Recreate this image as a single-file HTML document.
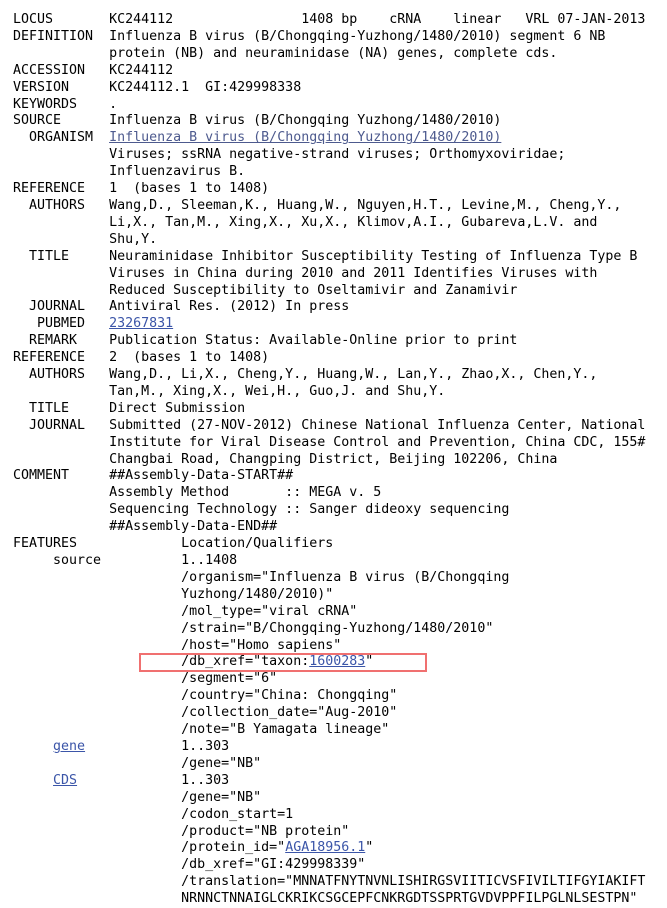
<!DOCTYPE html>
<html><head><meta charset="utf-8"><style>
html,body{margin:0;padding:0;background:#fff;width:667px;height:908px;overflow:hidden}
pre{margin:0;padding:12px 0 0 13px;font-family:"DejaVu Sans Mono","Liberation Mono",monospace;font-size:13.3px;line-height:16.9px;color:#000;white-space:pre}
a{color:#3b55a8;text-decoration:underline}
a.v{color:#4d5a8e}
.box{position:absolute;left:139px;top:653px;width:284px;height:15px;border:2px solid #f07070}
</style></head><body>
<div class="box"></div>
<pre>LOCUS       KC244112                1408 bp    cRNA    linear   VRL 07-JAN-2013
DEFINITION  Influenza B virus (B/Chongqing-Yuzhong/1480/2010) segment 6 NB
            protein (NB) and neuraminidase (NA) genes, complete cds.
ACCESSION   KC244112
VERSION     KC244112.1  GI:429998338
KEYWORDS    .
SOURCE      Influenza B virus (B/Chongqing Yuzhong/1480/2010)
  ORGANISM  <a class="v">Influenza B virus (B/Chongqing Yuzhong/1480/2010)</a>
            Viruses; ssRNA negative-strand viruses; Orthomyxoviridae;
            Influenzavirus B.
REFERENCE   1  (bases 1 to 1408)
  AUTHORS   Wang,D., Sleeman,K., Huang,W., Nguyen,H.T., Levine,M., Cheng,Y.,
            Li,X., Tan,M., Xing,X., Xu,X., Klimov,A.I., Gubareva,L.V. and
            Shu,Y.
  TITLE     Neuraminidase Inhibitor Susceptibility Testing of Influenza Type B
            Viruses in China during 2010 and 2011 Identifies Viruses with
            Reduced Susceptibility to Oseltamivir and Zanamivir
  JOURNAL   Antiviral Res. (2012) In press
   PUBMED   <a>23267831</a>
  REMARK    Publication Status: Available-Online prior to print
REFERENCE   2  (bases 1 to 1408)
  AUTHORS   Wang,D., Li,X., Cheng,Y., Huang,W., Lan,Y., Zhao,X., Chen,Y.,
            Tan,M., Xing,X., Wei,H., Guo,J. and Shu,Y.
  TITLE     Direct Submission
  JOURNAL   Submitted (27-NOV-2012) Chinese National Influenza Center, National
            Institute for Viral Disease Control and Prevention, China CDC, 155#
            Changbai Road, Changping District, Beijing 102206, China
COMMENT     ##Assembly-Data-START##
            Assembly Method       :: MEGA v. 5
            Sequencing Technology :: Sanger dideoxy sequencing
            ##Assembly-Data-END##
FEATURES             Location/Qualifiers
     source          1..1408
                     /organism="Influenza B virus (B/Chongqing
                     Yuzhong/1480/2010)"
                     /mol_type="viral cRNA"
                     /strain="B/Chongqing-Yuzhong/1480/2010"
                     /host="Homo sapiens"
                     /db_xref="taxon:<a>1600283</a>"
                     /segment="6"
                     /country="China: Chongqing"
                     /collection_date="Aug-2010"
                     /note="B Yamagata lineage"
     <a>gene</a>            1..303
                     /gene="NB"
     <a>CDS</a>             1..303
                     /gene="NB"
                     /codon_start=1
                     /product="NB protein"
                     /protein_id="<a>AGA18956.1</a>"
                     /db_xref="GI:429998339"
                     /translation="MNNATFNYTNVNLISHIRGSVIITICVSFIVILTIFGYIAKIFT
                     NRNNCTNNAIGLCKRIKCSGCEPFCNKRGDTSSPRTGVDVPPFILPGLNLSESTPN"
</pre>
</body></html>
